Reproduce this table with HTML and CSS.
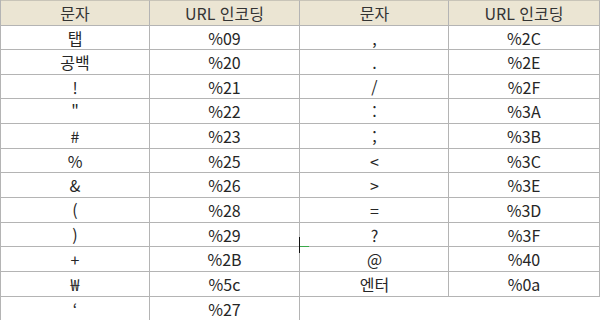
FILE: index.html
```html
<!DOCTYPE html>
<html lang="ko">
<head>
<meta charset="utf-8">
<link rel="stylesheet" href="styles.css">
</head>
<body>
<div class="sheet">
  <div class="cell head c1">문자</div><div class="cell head c2">URL 인코딩</div><div class="cell head c3">문자</div><div class="cell head c4">URL 인코딩</div>
  <div class="cell c1">탭</div><div class="cell c2">%09</div><div class="cell c3">,</div><div class="cell c4">%2C</div>
  <div class="cell c1">공백</div><div class="cell c2">%20</div><div class="cell c3">.</div><div class="cell c4">%2E</div>
  <div class="cell c1">!</div><div class="cell c2">%21</div><div class="cell c3">/</div><div class="cell c4">%2F</div>
  <div class="cell c1">"</div><div class="cell c2">%22</div><div class="cell c3">:</div><div class="cell c4">%3A</div>
  <div class="cell c1">#</div><div class="cell c2">%23</div><div class="cell c3">;</div><div class="cell c4">%3B</div>
  <div class="cell c1">%</div><div class="cell c2">%25</div><div class="cell c3">&lt;</div><div class="cell c4">%3C</div>
  <div class="cell c1">&amp;</div><div class="cell c2">%26</div><div class="cell c3">&gt;</div><div class="cell c4">%3E</div>
  <div class="cell c1">(</div><div class="cell c2">%28</div><div class="cell c3">=</div><div class="cell c4">%3D</div>
  <div class="cell c1">)</div><div class="cell c2">%29</div><div class="cell c3">?<span class="cursor"></span></div><div class="cell c4">%3F</div>
  <div class="cell c1">+</div><div class="cell c2">%2B</div><div class="cell c3">@</div><div class="cell c4">%40</div>
  <div class="cell c1">₩</div><div class="cell c2">%5c</div><div class="cell c3">엔터</div><div class="cell c4">%0a</div>
  <div class="cell c1">‘</div><div class="cell c2">%27</div><div class="blank"></div><div class="blank"></div>
</div>
</body>
</html>
```
FILE: styles.css
```css
html, body {
  margin: 0;
  padding: 0;
  background: #ffffff;
}
.sheet {
  width: 600px;
  height: 320px;
  display: grid;
  grid-template-columns: 149px 150px 149px 151px;
  grid-template-rows: 26px 24px 25px 24px 25px 25px 24px 25px 25px 24px 25px 25px 24px;
  border-left: 1px solid #b4b4b4;
  box-sizing: border-box;
  overflow: hidden;
  font-family: "Noto Sans CJK KR", "Noto Sans", sans-serif;
  font-size: 16px;
  color: #262626;
}
.cell {
  display: flex;
  align-items: center;
  justify-content: center;
  border-right: 1px solid #b4b4b4;
  border-bottom: 1px solid #b4b4b4;
  line-height: 1;
  white-space: nowrap;
  position: relative;
}
.head {
  background: #ebe5d3;
  border-top: 1px solid #c8c4b8;
  color: #333333;
}
.c3 {
  padding-left: 1px;
}
.cursor {
  position: absolute;
  z-index: 2;
  left: -1px;
  top: 14px;
  width: 1px;
  height: 16px;
  background: #111111;
}
.cursor::after {
  content: "";
  position: absolute;
  left: 1px;
  top: 9px;
  width: 9px;
  height: 1px;
  background: #3aa84a;
}
.blank {
  border: none;
}
```
